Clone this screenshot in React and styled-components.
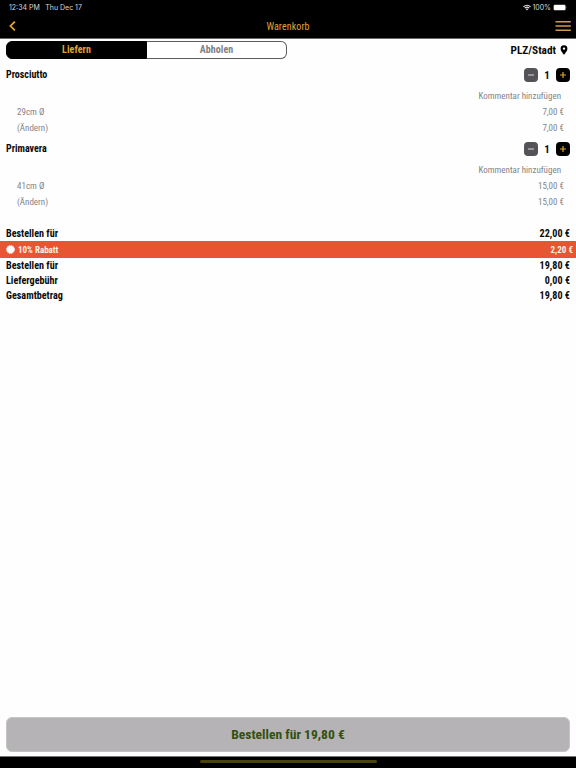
import styled, { createGlobalStyle } from "styled-components";

const GlobalStyle = createGlobalStyle`
  * {
    box-sizing: border-box;
  }
  body {
    margin: 0;
    background-color: #fefefe;
    color: #0a0a0a;
    font-family: "Roboto Condensed", Roboto, sans-serif;
    font-stretch: 75%;
  }
  button {
    padding: 0;
    border: 0;
    font: inherit;
    color: inherit;
    background: none;
  }
`;

const Screen = styled.div`
  display: flex;
  flex-direction: column;
  width: 576px;
  height: 768px;
  overflow: hidden;
`;

const Header = styled.header`
  height: 39px;
  background-color: black;
  border-bottom: 1px solid #6b686b;
`;

const StatusBar = styled.div`
  display: flex;
  align-items: center;
  height: 14px;
  padding: 0 8px 0 9px;
  color: #d8d8d8;
  font-family: Inter, sans-serif;
  font-stretch: 100%;
  font-size: 7px;
  white-space: nowrap;
`;

const StatusItem = styled.span`
  margin-right: ${(props) => props.$gap || 0}px;
`;

const Spacer = styled.span`
  flex: 1;
`;

const NavBar = styled.nav`
  display: grid;
  grid-template-columns: 1fr auto 1fr;
  align-items: center;
  height: 24px;
  padding: 0 5px 0 8px;
  color: #e0a632;
`;

const NavTitle = styled.h1`
  margin: 0;
  padding-right: 3px;
  font-size: 10px;
  font-weight: 400;
  letter-spacing: 0.1px;
`;

const NavButton = styled.button`
  display: flex;
  justify-self: ${(props) => props.$side};
`;

const Main = styled.main`
  flex: 1;
`;

const Delivery = styled.section`
  display: flex;
  justify-content: space-between;
  height: 26px;
  padding: 2px 6px 0;
`;

const Tabs = styled.div`
  display: flex;
  width: 281px;
  height: 17.5px;
`;

const Tab = styled.button`
  flex: 1;
  border: 1px solid ${(props) => (props.$active ? "black" : "#5c5a5e")};
  border-left-width: ${(props) => (props.$active ? 1 : 0)}px;
  border-radius: ${(props) => (props.$active ? "6px 0 0 6px" : "0 6px 6px 0")};
  font-size: 10px;
  font-weight: 700;
  line-height: 16px;
  letter-spacing: 0.1px;
  color: ${(props) => (props.$active ? "#e0a632" : "#828084")};
  background-color: ${(props) => (props.$active ? "black" : "white")};
`;

const Place = styled.button`
  display: flex;
  align-items: center;
  gap: 4px;
  height: 18px;
  padding-right: 2px;
  font-size: 11.3px;
  font-weight: 700;
`;

const Item = styled.article`
  height: 74px;
`;

const ItemHead = styled.div`
  display: flex;
  justify-content: space-between;
  height: 23px;
  padding: 0 6px;
`;

const ItemName = styled.h2`
  margin: 0;
  font-size: 10px;
  font-weight: 700;
  line-height: 20px;
`;

const Stepper = styled.div`
  display: flex;
  align-items: center;
  height: 20px;
`;

const StepButton = styled.button`
  display: flex;
  align-items: center;
  justify-content: center;
  width: 14px;
  height: 14px;
  border-radius: 4px;
  color: ${(props) => (props.$dark ? "#e0a42a" : "#c4c2c5")};
  background-color: ${(props) => (props.$dark ? "black" : "#565358")};
`;

const Count = styled.span`
  width: 18px;
  text-align: center;
  font-size: 11px;
  font-weight: 700;
`;

const Comment = styled.div`
  height: 16px;
  padding-right: 15px;
  text-align: right;
  font-size: 9px;
  line-height: 16px;
  color: #858387;
`;

const Option = styled.div`
  display: flex;
  justify-content: space-between;
  height: 16px;
  padding: 0 12px 0 17px;
  font-size: 9px;
  line-height: 16px;
  color: #858387;
`;

const Totals = styled.section`
  padding-top: 13px;
`;

const Total = styled.div`
  display: flex;
  justify-content: space-between;
  padding: 0 6px;
  font-size: 10.15px;
  font-weight: 700;
  line-height: 15.1px;
`;

const Discount = styled.div`
  display: flex;
  align-items: center;
  height: 17px;
  padding: 0 3px 0 6px;
  font-size: 9px;
  font-weight: 700;
  color: #fff0e8;
  background-color: #e95432;
`;

const DiscountLabel = styled.span`
  flex: 1;
  margin-left: 3px;
`;

const OrderButton = styled.button`
  height: 35px;
  margin: 0 6px 4px;
  padding-bottom: 2px;
  border: 1px solid #c5c4c5;
  border-radius: 6px;
  font-size: 13.6px;
  font-weight: 700;
  color: #34500f;
  background-color: #b5b3b5;
`;

const HomeBar = styled.footer`
  display: flex;
  justify-content: center;
  height: 12px;
  padding-top: 3px;
  border-top: 1px solid #777;
  background-color: black;
`;

const HomeIndicator = styled.div`
  width: 177px;
  height: 3px;
  border-radius: 2px;
  background-color: #4b430d;
`;

const WifiIcon = () => (
  <svg width="8" height="7" viewBox="0 0 16 13">
    <path
      d="M1 5Q8-1 15 5M3.5 7.7Q8 4 12.5 7.7"
      fill="none"
      stroke="#e4e4e4"
      strokeWidth="2.3"
    />
    <path d="M5.4 9.5Q8 7.6 10.6 9.5L8 12.4Z" fill="#e4e4e4" />
  </svg>
);

const BatteryIcon = () => (
  <svg width="15" height="7" viewBox="0 0 15 7">
    <rect x="0.3" y="0.5" width="12.6" height="6" rx="1.5" fill="#777" />
    <rect x="1" y="1.1" width="11.2" height="4.8" rx="1" fill="white" />
    <path d="M13.6 2.5q1 1 0 2z" fill="#888" />
  </svg>
);

const BackIcon = () => (
  <svg width="9" height="10" viewBox="0 0 9 10">
    <path d="M6.9 0.6L2.4 5l4.5 4.4" fill="none" stroke="#e8ab30" strokeWidth="1.7" />
  </svg>
);

const MenuIcon = () => (
  <svg width="16" height="12" viewBox="0 0 16 12">
    <path d="M0.5 1.8h15.3M0.5 6h15.3M0.5 10.2h15.3" stroke="#d09c3e" strokeWidth="1.6" />
  </svg>
);

const PinIcon = () => (
  <svg width="8" height="10" viewBox="0 0 8 10">
    <path
      fillRule="evenodd"
      d="M4 0.3A3.4 3.4 0 0 0 0.6 3.7C0.6 6 4 9.7 4 9.7S7.4 6 7.4 3.7A3.4 3.4 0 0 0 4 0.3ZM4 2.4A1.2 1.2 0 1 1 4 4.8 1.2 1.2 0 0 1 4 2.4Z"
    />
  </svg>
);

const StepIcon = ({ plus }) => (
  <svg width="6" height="6" viewBox="0 0 6 6">
    <path
      d={plus ? "M0 3h6M3 0v6" : "M0 3h6"}
      stroke="currentColor"
      strokeWidth="1.2"
    />
  </svg>
);

const BadgeIcon = () => (
  <svg width="9" height="9" viewBox="0 0 9 9">
    <circle cx="4.5" cy="4.5" r="3.7" fill="white" />
    <circle
      cx="4.5"
      cy="4.5"
      r="4"
      fill="none"
      stroke="white"
      strokeWidth="1"
      strokeDasharray="1.3 0.8"
    />
  </svg>
);

const items = [
  { name: "Prosciutto", size: "29cm Ø", price: "7,00 €" },
  { name: "Primavera", size: "41cm Ø", price: "15,00 €" },
];

const totals = [
  { label: "Bestellen für", value: "19,80 €" },
  { label: "Liefergebühr", value: "0,00 €" },
  { label: "Gesamtbetrag", value: "19,80 €" },
];

export default () => (
  <Screen>
    <GlobalStyle />
    <Header>
      <StatusBar>
        <StatusItem $gap={5.5}>12:34 PM</StatusItem>
        <StatusItem>Thu Dec 17</StatusItem>
        <Spacer />
        <WifiIcon />
        <StatusItem $gap={2}>&thinsp;100%</StatusItem>
        <BatteryIcon />
      </StatusBar>
      <NavBar>
        <NavButton $side="start" aria-label="Zurück">
          <BackIcon />
        </NavButton>
        <NavTitle>Warenkorb</NavTitle>
        <NavButton $side="end" aria-label="Menü">
          <MenuIcon />
        </NavButton>
      </NavBar>
    </Header>
    <Main>
      <Delivery>
        <Tabs>
          <Tab $active>Liefern</Tab>
          <Tab>Abholen</Tab>
        </Tabs>
        <Place>
          PLZ/Stadt
          <PinIcon />
        </Place>
      </Delivery>
      {items.map(({ name, size, price }) => (
        <Item key={name}>
          <ItemHead>
            <ItemName>{name}</ItemName>
            <Stepper>
              <StepButton>
                <StepIcon />
              </StepButton>
              <Count>1</Count>
              <StepButton $dark>
                <StepIcon plus />
              </StepButton>
            </Stepper>
          </ItemHead>
          <Comment>Kommentar hinzufügen</Comment>
          <Option>
            <span>{size}</span>
            <span>{price}</span>
          </Option>
          <Option>
            <span>(Ändern)</span>
            <span>{price}</span>
          </Option>
        </Item>
      ))}
      <Totals>
        <Total>
          <span>Bestellen für</span>
          <span>22,00 €</span>
        </Total>
        <Discount>
          <BadgeIcon />
          <DiscountLabel>10% Rabatt</DiscountLabel>
          <span>2,20 €</span>
        </Discount>
        {totals.map(({ label, value }) => (
          <Total key={label}>
            <span>{label}</span>
            <span>{value}</span>
          </Total>
        ))}
      </Totals>
    </Main>
    <OrderButton>Bestellen für 19,80 €</OrderButton>
    <HomeBar>
      <HomeIndicator />
    </HomeBar>
  </Screen>
);
